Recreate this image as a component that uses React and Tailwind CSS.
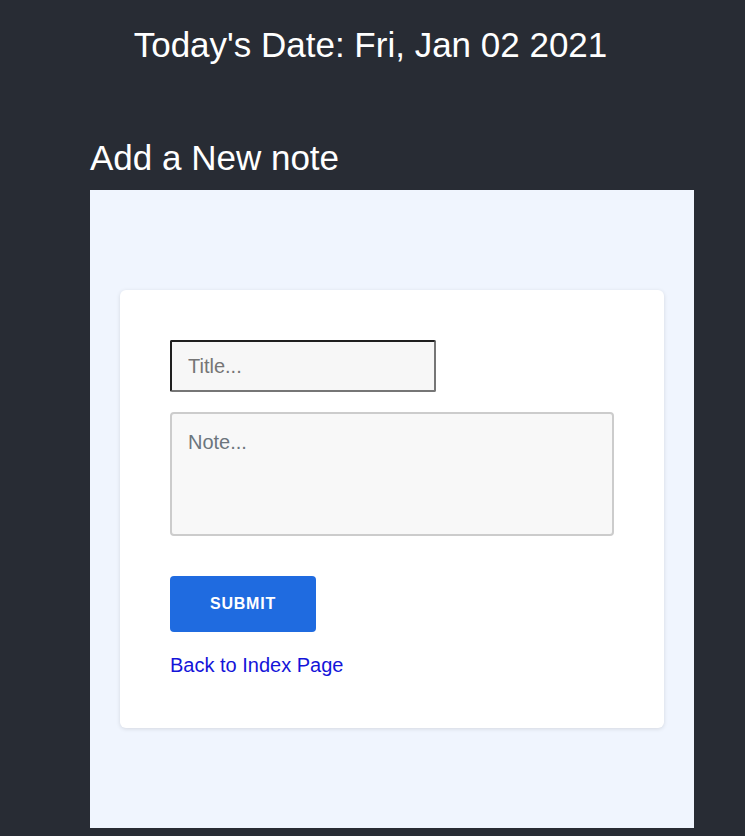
import React from 'react';

export default function App() {
  return (
    <div className="min-h-screen bg-[#282c34] pb-[8px] font-['Liberation_Sans',Arial,sans-serif]">
      <h1 className="pt-[25px] pr-[4px] text-center text-[35px] leading-[40px] text-white">
        Today's Date: Fri, Jan 02 2021
      </h1>

      <div className="ml-[90px] mt-[73px] w-[604px]">
        <h2 className="text-[35px] leading-[40px] text-white mb-[12px]">Add a New note</h2>

        <div className="bg-[#f0f5fe] px-[30px] py-[100px]">
          <div className="bg-white rounded-md shadow-[0_1px_4px_rgba(0,0,0,0.12)] p-[50px]">
            <input
              autoFocus
              type="text"
              placeholder="Title..."
              className="block w-[266px] h-[52px] px-[16px] text-[20px] bg-[#f7f7f7] rounded-[2px] border-2 border-t-[#1f1f1f] border-l-[#1f1f1f] border-b-[#767676] border-r-[#767676] outline-none placeholder:text-[#757575]"
            />
            <textarea
              placeholder="Note..."
              className="block mt-[20px] w-[444px] h-[124px] px-[16px] pt-[17px] pb-[13px] text-[20px] leading-[23px] bg-[#f8f8f8] border-2 border-[#cccccc] rounded resize-none outline-none placeholder:text-[#6c757d]"
            />
            <button className="block mt-[40px] w-[146px] h-[56px] bg-[#1f6be0] rounded text-white font-bold text-[16px] tracking-[0.8px]">
              SUBMIT
            </button>
            <a href="#" className="block mt-[21px] text-[20px] leading-[25px] text-[#1414d9]">
              Back to Index Page
            </a>
          </div>
        </div>
      </div>
    </div>
  );
}
